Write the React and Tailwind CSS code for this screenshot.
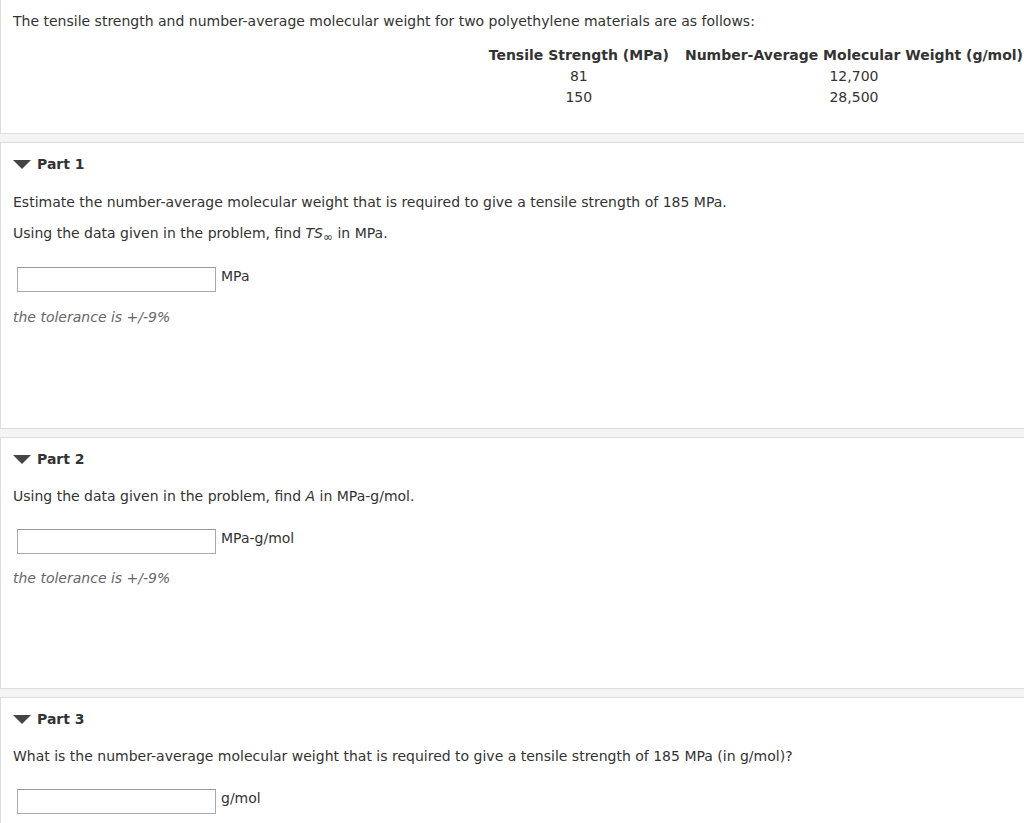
import React from 'react';

const Tri = () => (
  <svg width="18" height="9" viewBox="0 0 18 9" className="shrink-0">
    <polygon points="0,0 18,0 9,9" fill="#454545" />
  </svg>
);

const PartHead = ({ n }) => (
  <div className="flex items-center gap-[6px] pl-[12px] h-[16px] mt-[13px]">
    <Tri />
    <span className="font-bold text-[#333] leading-[16px]">Part {n}</span>
  </div>
);

const Answer = ({ unit, top }) => (
  <div className={`flex items-start gap-[5px] pl-[16px] ${top}`}>
    <input type="text" className="w-[199px] h-[25px] border border-[#aaa] border-t-[#999] bg-white outline-none" />
    <span className="leading-[16px] pt-[1px] text-[#333]">{unit}</span>
  </div>
);

const Tolerance = ({ top }) => (
  <p className={`pl-[12px] italic text-[#666] leading-[16px] ${top}`}>the tolerance is +/-9%</p>
);

export default function App() {
  return (
    <div
      className="min-h-screen bg-[#f4f4f4] text-[14px] text-[#333] flex flex-col gap-[8px]"
      style={{ fontFamily: '"DejaVu Sans", Verdana, sans-serif' }}
    >
      <section className="h-[134px] bg-white border-l border-b border-[#ddd] flex flex-col">
        <p className="pl-[12px] pt-[13px] leading-[16px]">
          The tensile strength and number-average molecular weight for two polyethylene materials are as follows:
        </p>
        <div className="flex justify-end pr-[1px] mt-[16px]">
          <table className="border-collapse">
            <thead>
              <tr className="h-[21px]">
                <th className="font-bold text-center whitespace-nowrap pl-[2px] pr-[16px]">Tensile Strength (MPa)</th>
                <th className="font-bold text-center whitespace-nowrap">Number-Average Molecular Weight (g/mol)</th>
              </tr>
            </thead>
            <tbody>
              <tr className="h-[21px]">
                <td className="text-center pl-[2px] pr-[16px]">81</td>
                <td className="text-center">12,700</td>
              </tr>
              <tr className="h-[21px]">
                <td className="text-center pl-[2px] pr-[16px]">150</td>
                <td className="text-center">28,500</td>
              </tr>
            </tbody>
          </table>
        </div>
      </section>

      <section className="h-[287px] bg-white border-l border-y border-[#ddd] flex flex-col">
        <PartHead n={1} />
        <p className="pl-[12px] leading-[16px] mt-[22px]">
          Estimate the number-average molecular weight that is required to give a tensile strength of 185 MPa.
        </p>
        <p className="pl-[12px] leading-[16px] mt-[15px]">
          Using the data given in the problem, find <i>TS</i>
          <span className="relative top-[3px] text-[12px] leading-[0]">∞</span> in MPa.
        </p>
        <Answer unit="MPa" top="mt-[26px]" />
        <Tolerance top="mt-[17px]" />
      </section>

      <section className="h-[252px] bg-white border-l border-y border-[#ddd] flex flex-col">
        <PartHead n={2} />
        <p className="pl-[12px] leading-[16px] mt-[21px]">
          Using the data given in the problem, find <i>A</i> in MPa-g/mol.
        </p>
        <Answer unit="MPa-g/mol" top="mt-[25px]" />
        <Tolerance top="mt-[16px]" />
      </section>

      <section className="flex-1 bg-white border-l border-t border-[#ddd] flex flex-col">
        <PartHead n={3} />
        <p className="pl-[12px] leading-[16px] mt-[21px]">
          What is the number-average molecular weight that is required to give a tensile strength of 185 MPa (in g/mol)?
        </p>
        <Answer unit="g/mol" top="mt-[25px]" />
      </section>
    </div>
  );
}
